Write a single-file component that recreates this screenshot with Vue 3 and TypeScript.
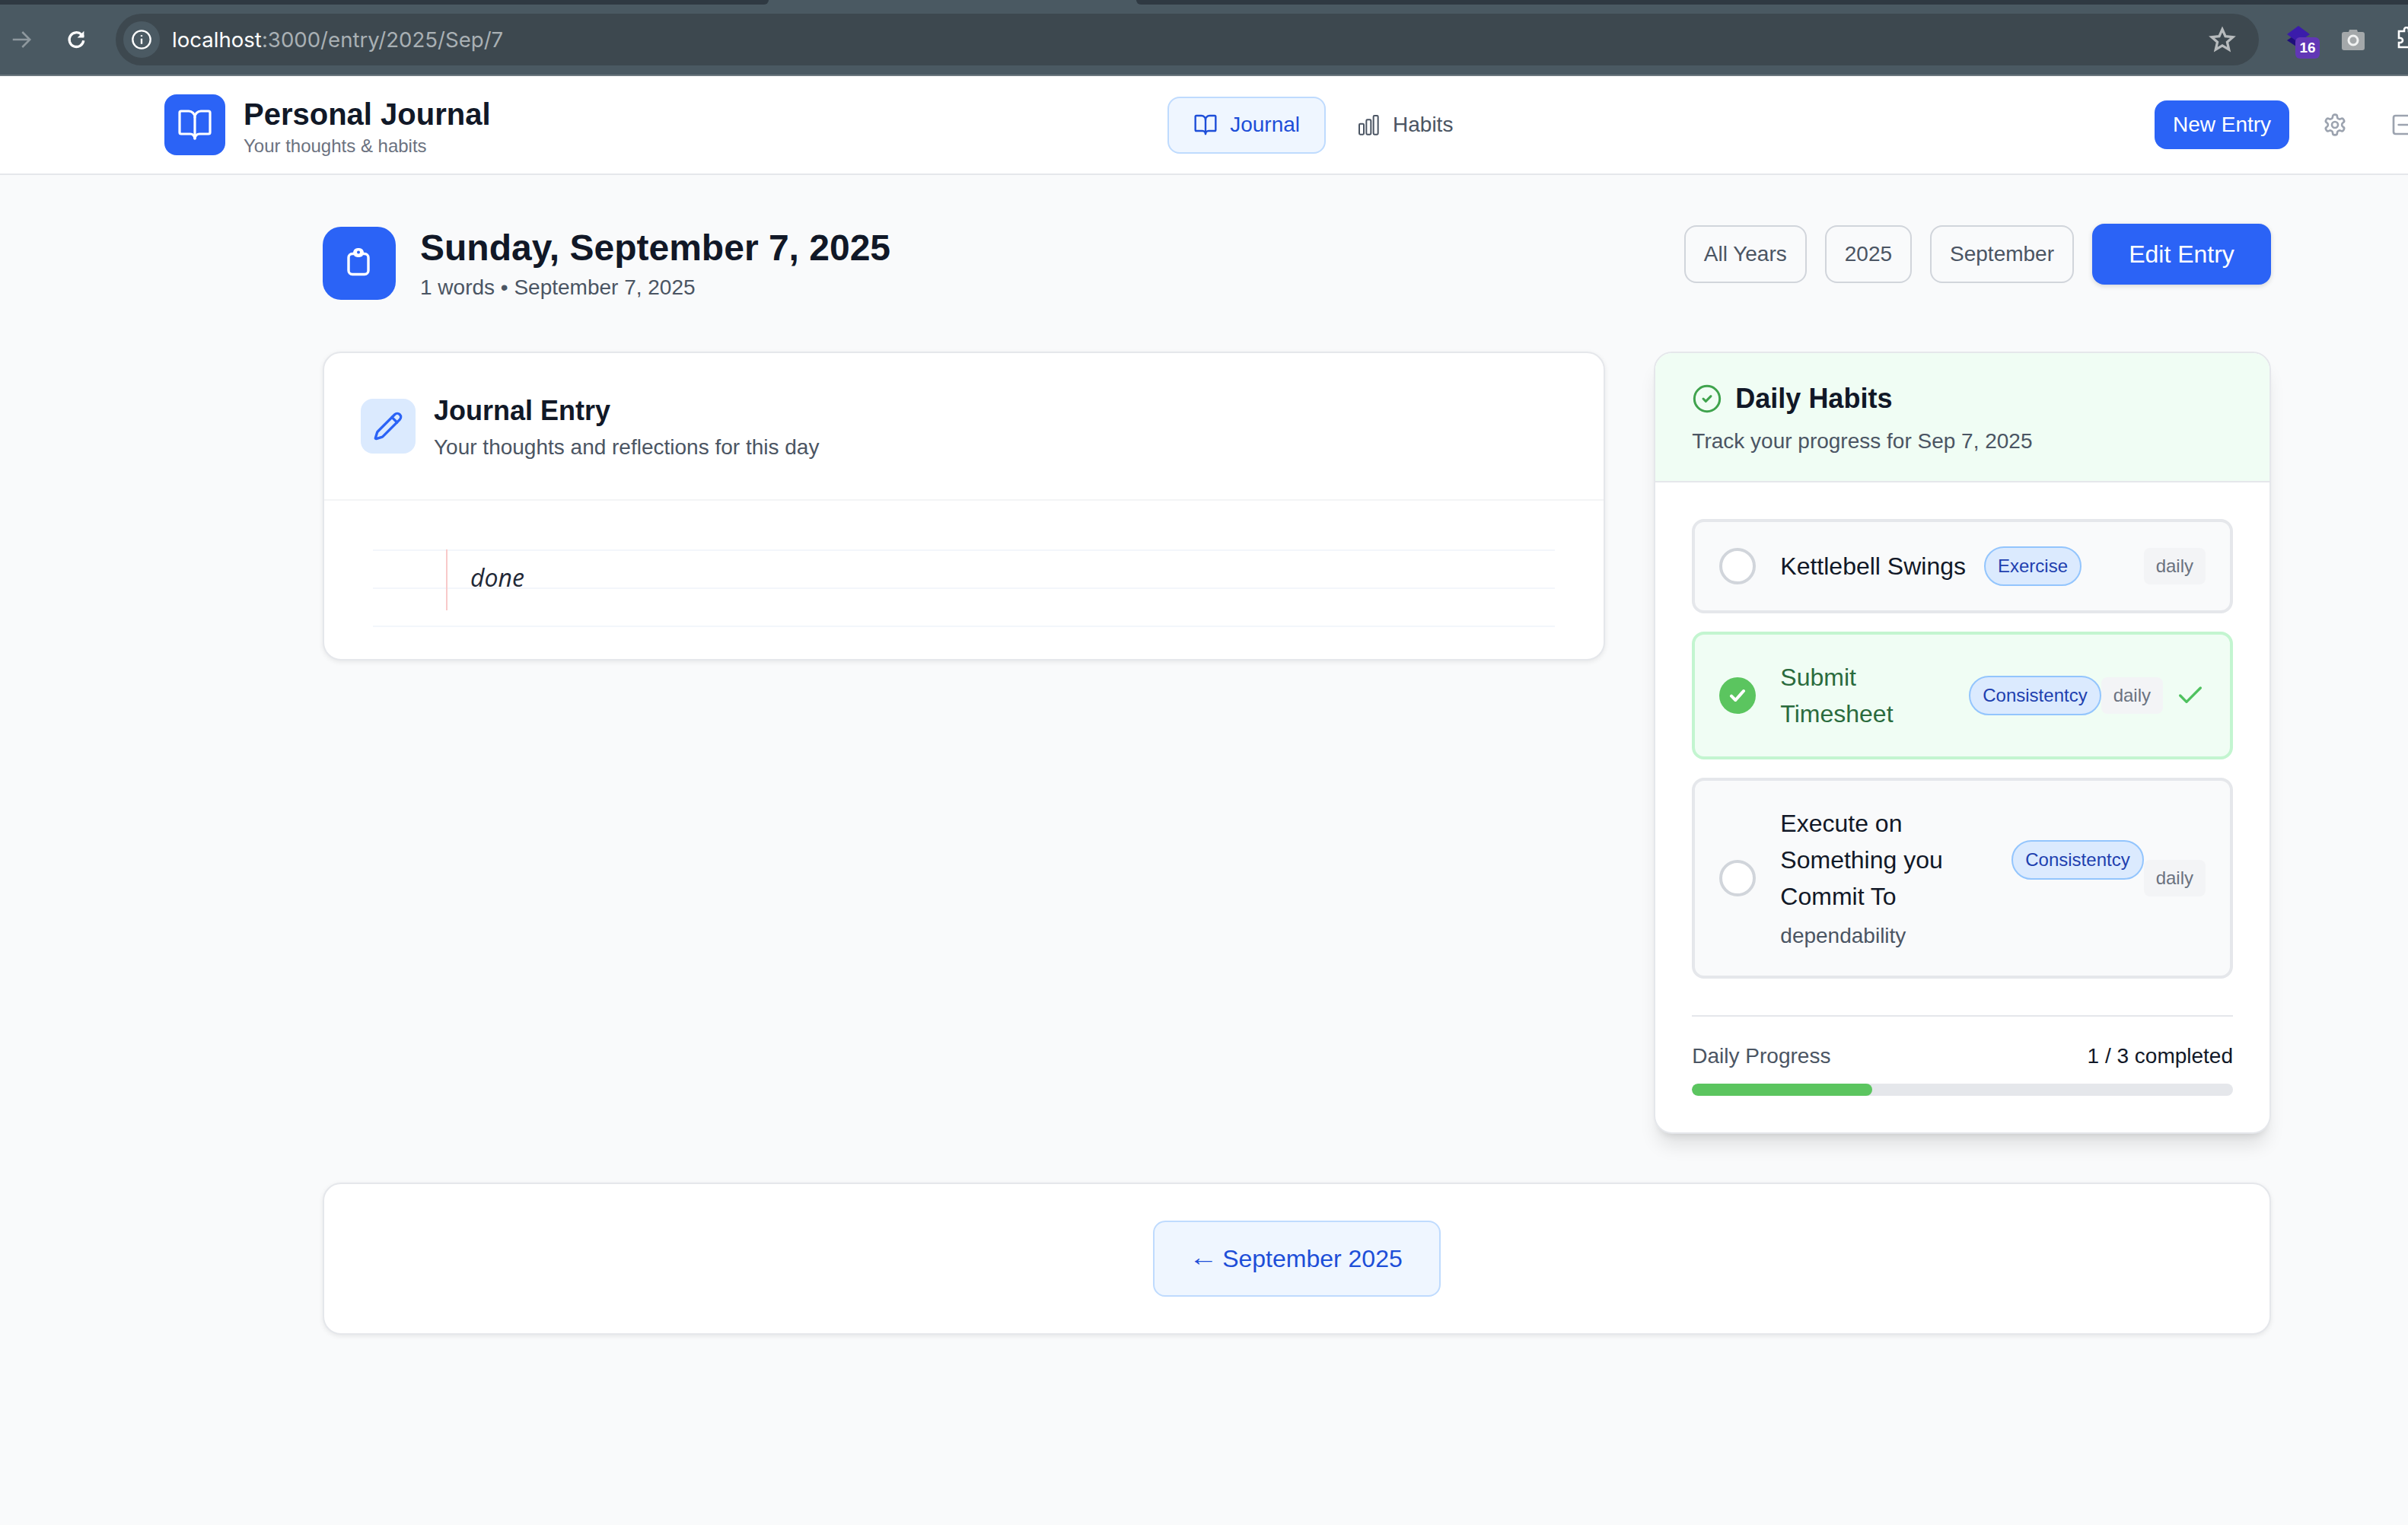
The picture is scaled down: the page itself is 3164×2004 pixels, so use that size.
<script setup lang="ts">
interface Habit {
  name: string
  tag: string
  desc?: string
  done: boolean
}

const filters = ['All Years', '2025', 'September']

const habits: Habit[] = [
  { name: 'Kettlebell Swings', tag: 'Exercise', done: false },
  { name: 'Submit Timesheet', tag: 'Consistentcy', done: true },
  { name: 'Execute on Something you Commit To', tag: 'Consistentcy', desc: 'dependability', done: false }
]

const doneCount = habits.filter(h => h.done).length
const progress = (doneCount / habits.length) * 100
</script>

<template>
  <div class="screen">
    <div class="chrome">
      <div class="tabstrip">
        <div class="tab-dark one"></div>
        <div class="tab-dark two"></div>
      </div>
      <div class="toolbar">
        <svg class="tool-icon forward" viewBox="0 0 24 24" fill="none" stroke="currentColor" stroke-width="2">
          <path d="M3 12h18M13 4l8 8-8 8" />
        </svg>
        <svg class="tool-icon reload" viewBox="0 0 24 24" fill="none" stroke="currentColor" stroke-width="2.6">
          <path d="M19 13a7.5 7.5 0 1 1-2.2-6.3L19 9" />
          <path d="M19.5 3v7h-7" fill="currentColor" stroke="none" />
        </svg>
        <div class="omnibox">
          <span class="site-info">
            <svg viewBox="0 0 24 24" fill="none" stroke="currentColor" stroke-width="2">
              <circle cx="12" cy="12" r="10" />
              <path d="M12 11v6M12 7v1.6" />
            </svg>
          </span>
          <span class="url"><b>localhost</b>:3000/entry/2025/Sep/7</span>
          <svg class="star" viewBox="0 0 24 24" fill="none" stroke="currentColor" stroke-width="2.2">
            <path d="M12 3l2.7 6.1 6.6.7-5 4.4 1.5 6.5L12 17.3l-5.8 3.4 1.5-6.5-5-4.4 6.6-.7z" />
          </svg>
        </div>
        <div class="extension">
          <svg viewBox="0 0 34 34">
            <path d="M2 20L17 10l15 10-15 10z" fill="#1f0f7a" />
            <path d="M2 12L17 1l15 11-15 11z" fill="#3b1cab" />
          </svg>
          <span class="ext-badge">16</span>
        </div>
        <svg class="camera" viewBox="0 0 30 28">
          <path d="M9 4l1-3h10l1 3h6a3 3 0 0 1 3 3v18a3 3 0 0 1-3 3H3a3 3 0 0 1-3-3V7a3 3 0 0 1 3-3z" fill="#a4a8aa" />
          <circle cx="15" cy="15" r="6" fill="none" stroke="#f1f2f2" stroke-width="3" />
        </svg>
        <svg class="puzzle" viewBox="0 0 30 30" fill="none" stroke="#fff" stroke-width="2.6">
          <path d="M2 6h7V4a3 3 0 0 1 6 0v2h8v7h2a3 3 0 0 1 0 6h-2v8H2v-6h2a3 3 0 0 0 0-6H2z" />
        </svg>
      </div>
    </div>

    <div class="page">
      <header class="app-header">
        <div class="brand">
          <div class="brand-logo">
            <svg viewBox="0 0 24 24" fill="none" stroke="#fff" stroke-width="1.6" stroke-linecap="round" stroke-linejoin="round">
              <path d="M12 7v14" />
              <path d="M3 18a1 1 0 0 1-1-1V4a1 1 0 0 1 1-1h5a4 4 0 0 1 4 4 4 4 0 0 1 4-4h5a1 1 0 0 1 1 1v13a1 1 0 0 1-1 1h-6a3 3 0 0 0-3 3 3 3 0 0 0-3-3z" />
            </svg>
          </div>
          <div class="brand-text">
            <div class="brand-title">Personal Journal</div>
            <div class="brand-sub">Your thoughts &amp; habits</div>
          </div>
        </div>

        <nav class="nav">
          <a class="nav-link active">
            <svg viewBox="0 0 24 24" fill="none" stroke="currentColor" stroke-width="1.8" stroke-linecap="round" stroke-linejoin="round">
              <path d="M12 7v14" />
              <path d="M3 18a1 1 0 0 1-1-1V4a1 1 0 0 1 1-1h5a4 4 0 0 1 4 4 4 4 0 0 1 4-4h5a1 1 0 0 1 1 1v13a1 1 0 0 1-1 1h-6a3 3 0 0 0-3 3 3 3 0 0 0-3-3z" />
            </svg>
            Journal
          </a>
          <a class="nav-link">
            <svg viewBox="0 0 24 24" fill="none" stroke="currentColor" stroke-width="1.5" stroke-linejoin="round">
              <rect x="3" y="11" width="4.5" height="10.5" rx="1" />
              <rect x="10" y="7" width="4.5" height="14.5" rx="1" />
              <rect x="17" y="3" width="4.5" height="18.5" rx="1" />
            </svg>
            Habits
          </a>
        </nav>

        <div class="header-actions">
          <button class="new-entry">New Entry</button>
          <button class="icon-btn">
            <svg viewBox="0 0 24 24" fill="none" stroke="currentColor" stroke-width="2" stroke-linecap="round" stroke-linejoin="round">
              <path d="M12.22 2h-.44a2 2 0 0 0-2 2v.18a2 2 0 0 1-1 1.73l-.43.25a2 2 0 0 1-2 0l-.15-.08a2 2 0 0 0-2.73.73l-.22.38a2 2 0 0 0 .73 2.73l.15.1a2 2 0 0 1 1 1.72v.51a2 2 0 0 1-1 1.74l-.15.09a2 2 0 0 0-.73 2.73l.22.38a2 2 0 0 0 2.73.73l.15-.08a2 2 0 0 1 2 0l.43.25a2 2 0 0 1 1 1.73V20a2 2 0 0 0 2 2h.44a2 2 0 0 0 2-2v-.18a2 2 0 0 1 1-1.73l.43-.25a2 2 0 0 1 2 0l.15.08a2 2 0 0 0 2.73-.73l.22-.39a2 2 0 0 0-.73-2.73l-.15-.08a2 2 0 0 1-1-1.74v-.5a2 2 0 0 1 1-1.74l.15-.09a2 2 0 0 0 .73-2.73l-.22-.38a2 2 0 0 0-2.73-.73l-.15.08a2 2 0 0 1-2 0l-.43-.25a2 2 0 0 1-1-1.73V4a2 2 0 0 0-2-2z" />
              <circle cx="12" cy="12" r="3" />
            </svg>
          </button>
          <button class="icon-btn exit">
            <svg viewBox="0 0 24 24" fill="none" stroke="currentColor" stroke-width="2" stroke-linecap="round" stroke-linejoin="round">
              <path d="M17 3H5a2 2 0 0 0-2 2v14a2 2 0 0 0 2 2h12" />
              <path d="M21 12H8" />
            </svg>
          </button>
        </div>
      </header>

      <main class="content">
        <section class="day-head">
          <div class="day-title">
            <div class="day-icon">
              <svg viewBox="0 0 40 40">
                <rect x="6" y="7.5" width="26" height="27" rx="5" fill="none" stroke="#fff" stroke-width="3.4" />
                <rect x="12" y="0" width="14" height="12" rx="6" fill="#fff" />
                <circle cx="19" cy="5.5" r="2" fill="#2b63f6" />
              </svg>
            </div>
            <div>
              <h1>Sunday, September 7, 2025</h1>
              <p>1 words • September 7, 2025</p>
            </div>
          </div>
          <div class="day-actions">
            <button v-for="f in filters" :key="f" class="filter">{{ f }}</button>
            <button class="edit-entry">Edit Entry</button>
          </div>
        </section>

        <section class="columns">
          <article class="card journal">
            <div class="journal-head">
              <div class="pencil-box">
                <svg viewBox="0 0 24 24" fill="none" stroke="currentColor" stroke-width="2" stroke-linecap="round" stroke-linejoin="round">
                  <path d="M21.17 6.81a1 1 0 0 0-3.99-3.99L3.84 16.17a2 2 0 0 0-.5.83l-1.32 4.35a.5.5 0 0 0 .62.62l4.35-1.32a2 2 0 0 0 .83-.5z" />
                  <path d="M15 5l4 4" />
                </svg>
              </div>
              <div>
                <h2>Journal Entry</h2>
                <p>Your thoughts and reflections for this day</p>
              </div>
            </div>
            <div class="journal-body">
              <div class="lined">
                <span class="margin-line"></span>
                <span class="hand">done</span>
              </div>
            </div>
          </article>

          <aside class="card habits">
            <div class="habits-head">
              <h2>
                <svg viewBox="0 0 24 24" fill="none" stroke="currentColor" stroke-width="1.8" stroke-linecap="round" stroke-linejoin="round">
                  <circle cx="12" cy="12" r="10" />
                  <path d="M9 12l2 2 4-4" />
                </svg>
                Daily Habits
              </h2>
              <p>Track your progress for Sep 7, 2025</p>
            </div>
            <div class="habits-body">
              <div class="habit-list">
                <div v-for="h in habits" :key="h.name" class="habit" :class="{ done: h.done }">
                  <span class="tick">
                    <svg v-if="h.done" viewBox="0 0 24 24" fill="none" stroke="#fff" stroke-width="3" stroke-linecap="round" stroke-linejoin="round">
                      <path d="M6 12.5l4 4 8-9" />
                    </svg>
                  </span>
                  <div class="habit-main">
                    <div class="habit-line">
                      <span class="habit-name">{{ h.name }}</span>
                      <span class="tag">{{ h.tag }}</span>
                    </div>
                    <div v-if="h.desc" class="habit-desc">{{ h.desc }}</div>
                  </div>
                  <span class="freq">daily</span>
                  <svg v-if="h.done" class="done-check" viewBox="0 0 24 24" fill="none" stroke="currentColor" stroke-width="2" stroke-linecap="round" stroke-linejoin="round">
                    <path d="M20 6L9 17l-5-5" />
                  </svg>
                </div>
              </div>
              <div class="progress">
                <div class="progress-row">
                  <span>Daily Progress</span>
                  <span class="count">{{ doneCount }} / {{ habits.length }} completed</span>
                </div>
                <div class="bar"><div class="bar-fill" :style="{ width: progress + '%' }"></div></div>
              </div>
            </div>
          </aside>
        </section>

        <section class="card back-card">
          <a class="back-link"><span class="arrow">←</span> September 2025</a>
        </section>
      </main>
    </div>
  </div>
</template>

<style>
html,
body {
  margin: 0;
  background: #f9fafb;
  overflow: hidden;
}
</style>

<style scoped>
.screen {
  width: 3164px;
  height: 2004px;
  overflow: hidden;
  font-family: 'Liberation Sans', Arial, sans-serif;
  color: #111827;
  background: #f9fafb;
}

/* browser bar */
.chrome {
  height: 100px;
  background: #4a5962;
  border-bottom: 2px solid #6b777e;
  box-sizing: border-box;
}
.tabstrip {
  height: 6px;
  display: flex;
}
.tab-dark {
  height: 6px;
  background: #2f3942;
}
.tab-dark.one {
  width: 1010px;
  border-bottom-right-radius: 6px;
}
.tab-dark.two {
  width: 1671px;
  margin-left: 483px;
  border-bottom-left-radius: 6px;
}
.toolbar {
  height: 92px;
  display: flex;
  align-items: center;
}
.tool-icon {
  width: 30px;
  height: 30px;
  flex: none;
}
.forward {
  margin-left: 13px;
  color: #8e989e;
}
.reload {
  margin-left: 43px;
  color: #fff;
}
.omnibox {
  flex: none;
  width: 2816px;
  height: 68px;
  margin-left: 36px;
  border-radius: 34px;
  background: #3d484f;
  display: flex;
  align-items: center;
  box-sizing: border-box;
  padding-left: 10px;
}
.site-info {
  width: 48px;
  height: 48px;
  border-radius: 50%;
  background: #4b5a63;
  color: #fff;
  display: flex;
  align-items: center;
  justify-content: center;
}
.site-info svg {
  width: 28px;
  height: 28px;
}
.url {
  margin-left: 16px;
  font-family: Inter, 'Liberation Sans', sans-serif;
  font-size: 27.6px;
  color: #a9b0b4;
}
.url b {
  font-weight: 400;
  color: #fff;
}
.star {
  width: 36px;
  height: 36px;
  margin-left: auto;
  margin-right: 30px;
  color: #b7bbbd;
}
.extension {
  position: relative;
  flex: none;
  width: 34px;
  height: 34px;
  margin-left: 35px;
  margin-top: -4px;
}
.extension svg {
  width: 34px;
  height: 34px;
}
.ext-badge {
  position: absolute;
  left: 13px;
  top: 16px;
  width: 32px;
  height: 28px;
  border-radius: 6px;
  background: #6137b5;
  color: #fff;
  font-size: 19px;
  font-weight: 700;
  line-height: 28px;
  text-align: center;
}
.camera {
  flex: none;
  width: 30px;
  height: 28px;
  margin-left: 40px;
}
.puzzle {
  width: 30px;
  height: 30px;
  margin-left: 43px;
  margin-top: -4px;
  flex: none;
}

/* app */
.page {
  width: 3408px;
}
.app-header {
  height: 130px;
  box-sizing: border-box;
  background: #fff;
  border-bottom: 2px solid #e5e7eb;
  padding: 0 219px 0 216px;
  display: flex;
  align-items: center;
  justify-content: space-between;
}
.brand {
  display: flex;
  align-items: center;
  gap: 24px;
}
.brand-logo {
  width: 80px;
  height: 80px;
  border-radius: 16px;
  background: #2b63f6;
  display: flex;
  align-items: center;
  justify-content: center;
}
.brand-logo svg {
  width: 48px;
  height: 48px;
}
.brand-text {
  margin-top: 4px;
}
.brand-title {
  font-size: 40px;
  font-weight: 700;
  line-height: 52px;
}
.brand-sub {
  font-size: 24px;
  line-height: 32px;
  color: #6b7280;
}
.nav {
  display: flex;
  gap: 6px;
  margin-left: 2px;
}
.nav-link {
  display: flex;
  align-items: center;
  gap: 16px;
  height: 75px;
  box-sizing: border-box;
  padding: 0 32px;
  border: 2px solid transparent;
  border-radius: 16px;
  font-size: 28px;
  color: #4b5563;
}
.nav-link svg {
  width: 32px;
  height: 32px;
}
.nav-link.active {
  background: #eff6ff;
  border-color: #bfdbfe;
  color: #1d4ed8;
}
.header-actions {
  display: flex;
  align-items: center;
  gap: 28px;
}
.new-entry {
  height: 64px;
  width: 177px;
  border: 0;
  border-radius: 16px;
  background: #2b63f6;
  color: #fff;
  font-family: inherit;
  font-size: 28px;
}
.icon-btn {
  padding: 16px;
  border: 0;
  background: none;
  color: #9ca3af;
  display: flex;
}
.icon-btn svg {
  width: 32px;
  height: 32px;
}
.icon-btn.exit {
  margin-left: -3px;
}

.content {
  width: 2560px;
  margin: 0 auto;
  padding-top: 64px;
}
.day-head {
  display: flex;
  justify-content: space-between;
  align-items: flex-start;
  margin-bottom: 64px;
}
.day-title {
  display: flex;
  align-items: center;
  gap: 32px;
}
.day-icon {
  width: 96px;
  height: 96px;
  border-radius: 24px;
  background: #2b63f6;
  display: flex;
  align-items: center;
  justify-content: center;
}
.day-icon svg {
  width: 40px;
  height: 40px;
}
.day-title h1 {
  margin: 0;
  font-size: 48px;
  line-height: 64px;
  font-weight: 700;
}
.day-title p {
  margin: 0;
  font-size: 28px;
  line-height: 40px;
  color: #4b5563;
}
.day-actions {
  display: flex;
  align-items: center;
  gap: 24px;
}
.filter {
  height: 76px;
  padding: 0 24px;
  border: 2px solid #d1d5db;
  border-radius: 16px;
  background: transparent;
  color: #4b5563;
  font-family: inherit;
  font-size: 28px;
}
.edit-entry {
  width: 235px;
  height: 80px;
  border: 0;
  border-radius: 16px;
  background: #2b63f6;
  color: #fff;
  font-family: inherit;
  font-size: 32px;
  box-shadow: 0 2px 6px rgba(0, 0, 0, 0.15);
}

.card {
  background: #fff;
  border: 2px solid #e5e7eb;
  border-radius: 24px;
  box-sizing: border-box;
  box-shadow: 0 2px 6px rgba(0, 0, 0, 0.08);
}
.columns {
  display: grid;
  grid-template-columns: repeat(3, 1fr);
  gap: 64px;
  align-items: start;
  margin-bottom: 64px;
}
.journal {
  grid-column: span 2;
}
.journal-head {
  display: flex;
  align-items: center;
  gap: 24px;
  padding: 48px;
  border-bottom: 2px solid #f3f4f6;
}
.pencil-box {
  width: 72px;
  height: 72px;
  border-radius: 16px;
  background: #dbeafe;
  color: #2b63f6;
  display: flex;
  align-items: center;
  justify-content: center;
}
.pencil-box svg {
  width: 40px;
  height: 40px;
}
.journal-head h2 {
  margin: 0;
  font-size: 36px;
  line-height: 56px;
  font-weight: 700;
}
.journal-head p {
  margin: 0;
  font-size: 28px;
  line-height: 40px;
  color: #4b5563;
}
.journal-body {
  padding: 64px 64px 42px;
}
.lined {
  position: relative;
  height: 102px;
  background-image: linear-gradient(#f3f6fb 2px, transparent 2px);
  background-size: 100% 50px;
  padding-left: 128px;
}
.margin-line {
  position: absolute;
  left: 96px;
  top: 0;
  width: 2px;
  height: 80px;
  background: #f8caca;
}
.hand {
  display: block;
  font-family: 'Open Sans', sans-serif;
  font-style: italic;
  font-size: 32px;
  line-height: 74px;
  color: #1f2937;
}

.habits {
  overflow: hidden;
  box-shadow: 0 20px 25px -5px rgba(0, 0, 0, 0.1), 0 8px 10px -6px rgba(0, 0, 0, 0.1);
}
.habits-head {
  padding: 32px 48px;
  background: #f0fdf4;
  border-bottom: 2px solid #e5e7eb;
}
.habits-head h2 {
  margin: 0 0 8px;
  display: flex;
  align-items: center;
  gap: 17px;
  font-size: 36px;
  line-height: 56px;
  font-weight: 700;
}
.habits-head h2 svg {
  width: 40px;
  height: 40px;
  color: #3fa34d;
}
.habits-head p {
  margin: 0;
  font-size: 28px;
  line-height: 40px;
  color: #4b5563;
}
.habits-body {
  padding: 48px;
}
.habit-list {
  display: flex;
  flex-direction: column;
  gap: 24px;
}
.habit {
  display: flex;
  align-items: center;
  padding: 32px;
  border: 4px solid #e5e7eb;
  border-radius: 16px;
  background: #f9fafb;
}
.habit.done {
  background: #f0fdf4;
  border-color: #c3f5d0;
}
.tick {
  flex: none;
  width: 48px;
  height: 48px;
  box-sizing: border-box;
  border: 4px solid #d1d5db;
  border-radius: 50%;
  background: #fff;
  margin-right: 32px;
}
.habit.done .tick {
  border: 0;
  background: #5bc55f;
  display: flex;
  align-items: center;
  justify-content: center;
}
.tick svg {
  width: 32px;
  height: 32px;
}
.habit-main {
  flex: 1;
  min-width: 0;
}
.habit-line {
  display: flex;
  align-items: center;
  gap: 24px;
}
.habit-name {
  font-size: 32px;
  line-height: 48px;
}
.habit.done .habit-name {
  color: #2a6b3d;
}
.tag {
  flex: none;
  padding: 8px 16px;
  border: 2px solid #93c5fd;
  border-radius: 999px;
  background: #dbeafe;
  color: #1e40af;
  font-size: 24px;
  line-height: 32px;
}
.habit-desc {
  margin-top: 8px;
  font-size: 28px;
  line-height: 40px;
  color: #4b5563;
}
.freq {
  flex: none;
  padding: 8px 16px;
  border-radius: 8px;
  background: #f3f4f6;
  color: #6b7280;
  font-size: 24px;
  line-height: 32px;
}
.done-check {
  flex: none;
  width: 40px;
  height: 40px;
  margin-left: 16px;
  color: #4fc25f;
}
.progress {
  margin-top: 48px;
  padding-top: 32px;
  border-top: 2px solid #e5e7eb;
}
.progress-row {
  display: flex;
  justify-content: space-between;
  margin-bottom: 16px;
  font-size: 28px;
  line-height: 40px;
  color: #4b5563;
}
.count {
  color: #111827;
}
.bar {
  height: 16px;
  border-radius: 8px;
  background: #e5e7eb;
  overflow: hidden;
}
.bar-fill {
  height: 100%;
  border-radius: 8px;
  background: #5bc55f;
}

.back-card {
  padding: 48px;
  display: flex;
  justify-content: center;
}
.back-link {
  padding: 24px 48px;
  border: 2px solid #bfdbfe;
  border-radius: 16px;
  background: #eff6ff;
  color: #1d4ed8;
  font-size: 32px;
  line-height: 48px;
}
.arrow {
  display: inline-block;
  transform: translateY(-2px) scaleX(1.2);
}
</style>
